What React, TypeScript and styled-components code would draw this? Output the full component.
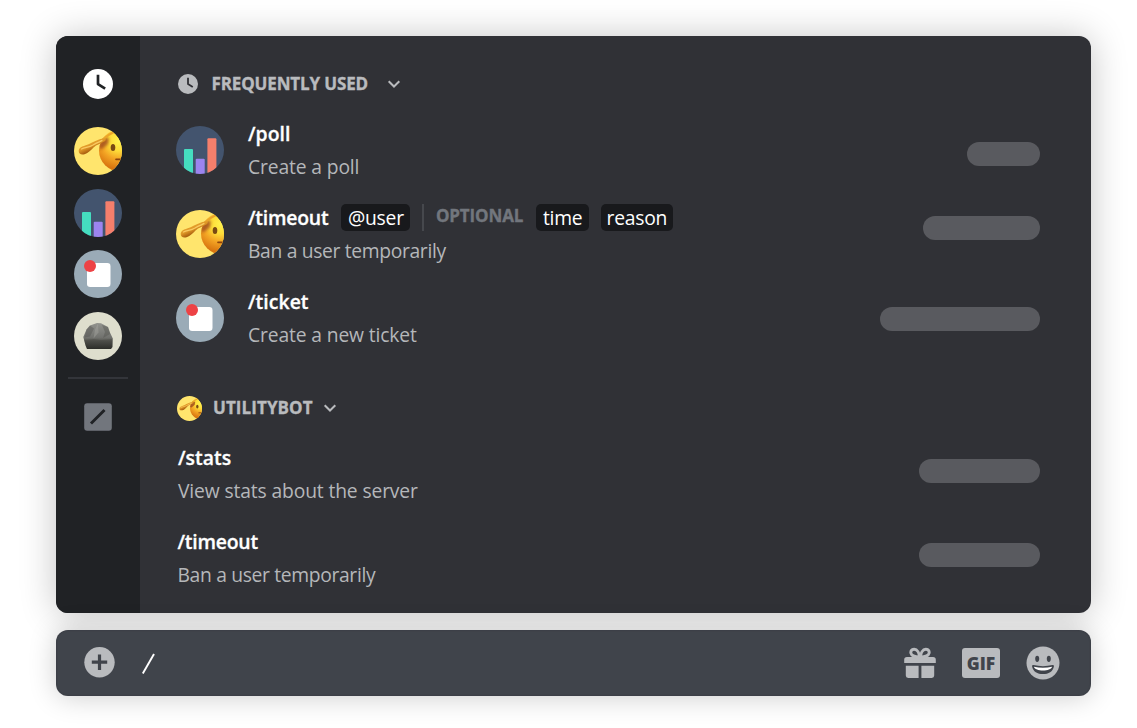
import React, { useId } from "react";
import styled, { createGlobalStyle } from "styled-components";

const Global = createGlobalStyle`
  * { box-sizing: border-box; }
  body {
    margin: 0;
    background: #fff;
    font-family: "Open Sans", "Noto Sans", sans-serif;
    -webkit-font-smoothing: antialiased;
  }
  svg { display: block; flex: none; }
`;

const Page = styled.main`
  width: 1137px;
  height: 728px;
  padding: 36px 46px 32px 56px;
  display: flex;
  flex-direction: column;
  gap: 16.6px;
  overflow: hidden;
`;

const Panel = styled.section`
  display: flex;
  width: 1035px;
  height: 577.4px;
  flex: none;
  border-radius: 12px;
  background: #303136;
  box-shadow: 0 1px 36px rgba(0, 0, 0, 0.24);
`;

const Rail = styled.nav`
  width: 84px;
  padding-top: 33px;
  display: flex;
  flex-direction: column;
  align-items: center;
  background: #202225;
  border-radius: 12px 0 0 12px;
`;

const RailBots = styled.div`
  display: flex;
  flex-direction: column;
  gap: 13.6px;
  margin-top: 28.3px;
`;

const Divider = styled.hr`
  width: 60px;
  height: 2px;
  margin: 17.4px 0 23.3px;
  border: 0;
  background: #33353a;
`;

const Content = styled.div`
  flex: 1;
  padding: 15px 51px 0 36px;
  display: flex;
  flex-direction: column;
  gap: 6px;
`;

const Group = styled.section`
  display: flex;
  flex-direction: column;
`;

const GroupHeader = styled.header<{ $gap: number; $inset: number; $track: number }>`
  height: 66px;
  display: flex;
  align-items: center;
  padding-left: ${(p) => p.$inset}px;
  color: #b9bbbe;
  h2 {
    margin: 0 ${(p) => p.$gap}px 0 0;
    font-size: 17px;
    line-height: 24px;
    font-weight: 700;
    letter-spacing: ${(p) => p.$track}px;
    -webkit-text-stroke: 0.35px currentColor;
  }
`;

const HeaderIcon = styled.span<{ $space: number }>`
  margin-right: ${(p) => p.$space}px;
`;

const Row = styled.article<{ $inset?: number }>`
  height: 84px;
  display: flex;
  align-items: flex-start;
  padding-left: ${(p) => p.$inset ?? 0}px;
`;

const RowAvatar = styled.div`
  margin: 9px 24px 0 0;
`;

const RowText = styled.div`
  flex: 1;
`;

const TitleLine = styled.div`
  height: 33px;
  display: flex;
  align-items: center;
`;

const Command = styled.h3<{ $track?: number }>`
  margin: 0;
  color: #fff;
  font-size: 19.4px;
  line-height: 33px;
  font-weight: 600;
  letter-spacing: ${(p) => p.$track ?? 0.05}px;
  -webkit-text-stroke: 0.3px currentColor;
`;

const Description = styled.p<{ $track?: number }>`
  margin: 0;
  color: #b5b7ba;
  font-size: 19.3px;
  line-height: 33px;
  letter-spacing: ${(p) => p.$track ?? -0.14}px;
`;

const Tag = styled.span<{ $width: number }>`
  width: ${(p) => p.$width}px;
  height: 27px;
  display: flex;
  justify-content: center;
  border-radius: 5px;
  background: #18191c;
  color: #fff;
  font-size: 19.3px;
  line-height: 27px;
  letter-spacing: -0.25px;
`;

const Params = styled.div`
  display: flex;
  align-items: center;
  margin-left: 13px;
`;

const Rule = styled.span`
  width: 2px;
  height: 27px;
  margin: 0 11.5px 0 12px;
  background: #46484d;
`;

const Optional = styled.span`
  width: 89px;
  margin-right: 11.5px;
  padding-bottom: 4px;
  color: #72767d;
  font-size: 17px;
  font-weight: 700;
  letter-spacing: -0.12px;
  -webkit-text-stroke: 0.35px currentColor;
`;

const Tags = styled.div`
  display: flex;
  gap: 12px;
`;

const Placeholder = styled.div<{ $width: number; $top: number }>`
  width: ${(p) => p.$width}px;
  height: 24px;
  margin-top: ${(p) => p.$top}px;
  border-radius: 12px;
  background: #595a5f;
`;

const Composer = styled.footer`
  width: 1035px;
  height: 66px;
  flex: none;
  display: flex;
  align-items: center;
  padding: 0 31px 0 28px;
  border-radius: 12px;
  background: #40444b;
  box-shadow: 0 1px 28px rgba(0, 0, 0, 0.2), inset 0 0 2px rgba(24, 25, 35, 0.35);
`;

const Draft = styled.div`
  flex: 1;
  padding: 3px 0 0 25px;
`;

const Actions = styled.div`
  display: flex;
  align-items: center;
  gap: 26px;
`;

const GifBadge = styled.span`
  width: 38px;
  height: 30px;
  display: flex;
  align-items: center;
  justify-content: center;
  border-radius: 3px;
  background: #b9bbbe;
  color: #40444b;
  font-size: 17.5px;
  line-height: 30px;
  font-weight: 800;
`;

function Clock({ size, fill, hand }: { size: number; fill: string; hand: string }) {
  return (
    <svg width={size} height={size} viewBox="0 0 30 30">
      <circle cx="15" cy="15" r="15" fill={fill} />
      <path d="M15 7v8.100l6 3.800" fill="none" stroke={hand} strokeWidth="2.700" strokeLinecap="square" strokeLinejoin="round" />
    </svg>
  );
}

function Salute({ size = 48 }: { size?: number }) {
  const id = useId();
  return (
    <svg width={size} height={size} viewBox="0 0 48 48">
      <defs>
        <clipPath id={id + "c"}><circle cx="24" cy="24" r="24" /></clipPath>
        <clipPath id={id + "k"}><circle cx="46" cy="23.5" r="21" /></clipPath>
        <radialGradient id={id + "f"} gradientUnits="userSpaceOnUse" cx="45" cy="14" r="28">
          <stop offset="0" stopColor="#fff34d" />
          <stop offset=".35" stopColor="#fedc39" />
          <stop offset=".65" stopColor="#f3a424" />
          <stop offset="1" stopColor="#d8740f" />
        </radialGradient>
        <linearGradient id={id + "h"} gradientUnits="userSpaceOnUse" x1="14" y1="15" x2="18" y2="24">
          <stop offset="0" stopColor="#e9a730" />
          <stop offset=".5" stopColor="#dd9526" />
          <stop offset="1" stopColor="#a4590c" />
        </linearGradient>
        <filter id={id + "b"} x="-50%" y="-50%" width="200%" height="200%"><feGaussianBlur stdDeviation="1.5" /></filter>
      </defs>
      <g clipPath={`url(#${id}c)`}>
        <path d="M0 0h48v48H0z" fill="#ffe56d" />
        <circle cx="46" cy="23.500" r="21" fill={`url(#${id}f)`} />
        <g clipPath={`url(#${id}k)`}>
          <path d="M24 21l4-10 7 0-1 6-6 5z" fill="#96401a" opacity=".75" filter={`url(#${id}b)`} />
        </g>
        <path d="M29 12.200C32 9.500 35 7.300 40 5" fill="none" stroke="#eba52b" strokeWidth="2" />
        <path d="M4.700 23.800C5 20.800 8 19.600 11 18.600C16 16.800 20 14 25 12.400C27.500 11.600 29.600 10.800 31 11.300C32.300 12 32 13.700 30.500 14.500C27 16.500 22.500 17.500 19.500 20.500C17 23 14.500 26 10.500 27.300C7 28.300 4.500 26.500 4.700 23.800z" fill={`url(#${id}h)`} />
        <path d="M7.500 22C11.500 20.200 15 20.500 19 18C22 16 25 15 28 13.700" fill="none" stroke="#f9ca62" strokeWidth="1.300" strokeLinecap="round" />
        <ellipse cx="39" cy="20.500" rx="2.300" ry="3.500" fill="#794a13" />
        <path d="M42 32.300h6" stroke="#8c430d" strokeWidth="1.700" strokeLinecap="round" />
      </g>
    </svg>
  );
}

function Poll() {
  const id = useId();
  return (
    <svg width="48" height="48" viewBox="0 0 48 48">
      <clipPath id={id}><circle cx="24" cy="24" r="24" /></clipPath>
      <g clipPath={`url(#${id})`}>
        <path d="M0 0h48v48H0z" fill="#43546e" />
        <rect x="8" y="23" width="9" height="27" rx="1" fill="#45ddc0" />
        <rect x="19.700" y="32.700" width="9" height="18" rx="1" fill="#9c84ef" />
        <rect x="31.400" y="12.300" width="9" height="38" rx="1" fill="#f57f6c" />
      </g>
    </svg>
  );
}

function Ticket() {
  return (
    <svg width="48" height="48" viewBox="0 0 48 48">
      <circle cx="24" cy="24" r="24" fill="#9aabb7" />
      <rect x="13" y="13" width="23.500" height="24" rx="3.200" fill="#fff" />
      <circle cx="16" cy="16" r="6" fill="#ed4245" />
    </svg>
  );
}

function Rock() {
  const id = useId();
  return (
    <svg width="48" height="48" viewBox="0 0 48 48">
      <defs>
        <linearGradient id={id} x1="0" y1="0" x2="0" y2="1">
          <stop offset="0" stopColor="#92938e" />
          <stop offset=".55" stopColor="#72736f" />
          <stop offset=".7" stopColor="#555651" />
          <stop offset="1" stopColor="#2e2f2b" />
        </linearGradient>
      </defs>
      <circle cx="24" cy="24" r="24" fill="#dedecd" />
      <path d="M12.500 17.500L16 13.500l7-2.500 4 .3 7 3.700 2.200 6 2.600 5.500-.3 8.500-1.500 2H13l-1.500-3.500L9.300 25z" fill={`url(#${id})`} />
      <path d="M12.500 17.500L16 13.500l4 3-4 8-5.500 1z" fill="#50514d" opacity=".4" />
      <path d="M24 11.500l-3 6-1.500 9 5-6z" fill="#aaaaa4" opacity=".4" />
      <path d="M28 13l3 7-2 6 7-4-2-7z" fill="#4a4b46" opacity=".35" />
      <path d="M10 28l10-1 7 1 11-1-.5 8-1 2H13z" fill="#262724" opacity=".2" />
    </svg>
  );
}

function SlashBox() {
  return (
    <svg width="28" height="28" viewBox="0 0 28 28">
      <rect x=".2" y=".2" width="27.600" height="27.600" rx="3" fill="#72767d" />
      <path d="M8 19.500L19.500 8" stroke="#202225" strokeWidth="2.900" strokeLinecap="square" />
    </svg>
  );
}

function Chevron() {
  return (
    <svg width="14" height="10" viewBox="0 0 14 10">
      <path d="M1.700 2.200L7 7.500l5.300-5.300" fill="none" stroke="#b9bbbe" strokeWidth="2" />
    </svg>
  );
}

function Plus() {
  return (
    <svg width="31" height="31" viewBox="0 0 31 31">
      <circle cx="15.500" cy="15.200" r="15.200" fill="#b9bbbe" />
      <path d="M15.500 7.500v15.400M7.800 15.200h15.400" stroke="#40444b" strokeWidth="3.200" />
    </svg>
  );
}

function Gift() {
  return (
    <svg width="32" height="32" viewBox="0 0 32 32">
      <g fill="#b9bbbe">
        <path d="M3 10h26a2.800 2.800 0 0 1 2.800 2.800V16H.2v-3.200A2.800 2.800 0 0 1 3 10z" />
        <path d="M1.800 18.800h12.800V31H4.200a2.400 2.400 0 0 1-2.400-2.400zM17.400 18.800h12.800v9.800a2.400 2.400 0 0 1-2.400 2.400H17.400z" />
      </g>
      <path d="M15.600 10.300C15.300 6 13.300 2.300 10.200 2.300C6.800 2.300 5.800 5.800 7.700 7.800C9.400 9.600 13 9.900 15.600 10.300zM16.400 10.300C16.700 6 18.700 2.300 21.800 2.300C25.200 2.300 26.200 5.800 24.300 7.800C22.600 9.600 19 9.900 16.400 10.300z" fill="none" stroke="#b9bbbe" strokeWidth="3" strokeLinejoin="round" />
    </svg>
  );
}

function Smile() {
  return (
    <svg width="34" height="34" viewBox="0 0 34 34">
      <circle cx="17" cy="17" r="16.500" fill="#b9bbbe" />
      <ellipse cx="11.200" cy="12.800" rx="2" ry="3.100" fill="#40444b" />
      <ellipse cx="22.800" cy="12.800" rx="2" ry="3.100" fill="#40444b" />
      <path d="M7.600 19c6 1.500 12.800 1.500 18.800 0 1-.2 1.700.4 1.500 1.400C27 25.500 22.500 28 17 28S7 25.500 6.100 20.400C5.900 19.400 6.600 18.800 7.600 19z" fill="#40444b" />
      <path d="M7.900 20.700c6 1.400 12.200 1.400 18.200 0-.9 2.700-4.500 3.700-9.100 3.700s-8.200-1-9.100-3.700z" fill="#fff" />
    </svg>
  );
}

export default function App() {
  return (
    <>
      <Global />
      <Page>
        <Panel>
          <Rail>
            <Clock size={30} fill="#fff" hand="#202225" />
            <RailBots>
              <Salute />
              <Poll />
              <Ticket />
              <Rock />
            </RailBots>
            <Divider />
            <SlashBox />
          </Rail>
          <Content>
            <Group>
              <GroupHeader $gap={19} $inset={2} $track={-0.14}>
                <HeaderIcon $space={13.5}><Clock size={20} fill="#b9bbbe" hand="#2f3035" /></HeaderIcon>
                <h2>FREQUENTLY USED</h2>
                <Chevron />
              </GroupHeader>
              <Row>
                <RowAvatar><Poll /></RowAvatar>
                <RowText>
                  <Command>/poll</Command>
                  <Description>Create a poll</Description>
                </RowText>
                <Placeholder $width={73.5} $top={25.4} />
              </Row>
              <Row>
                <RowAvatar><Salute /></RowAvatar>
                <RowText>
                  <TitleLine>
                    <Command $track={-0.22}>/timeout</Command>
                    <Params>
                      <Tag $width={69}>@user</Tag>
                      <Rule />
                      <Optional>OPTIONAL</Optional>
                      <Tags>
                        <Tag $width={52.5}>time</Tag>
                        <Tag $width={72}>reason</Tag>
                      </Tags>
                    </Params>
                  </TitleLine>
                  <Description $track={-0.34}>Ban a user temporarily</Description>
                </RowText>
                <Placeholder $width={117} $top={15} />
              </Row>
              <Row>
                <RowAvatar><Ticket /></RowAvatar>
                <RowText>
                  <Command>/ticket</Command>
                  <Description>Create a new ticket</Description>
                </RowText>
                <Placeholder $width={160.5} $top={22.4} />
              </Row>
            </Group>
            <Group>
              <GroupHeader $gap={10.5} $inset={1} $track={0.08}>
                <HeaderIcon $space={11}><Salute size={25} /></HeaderIcon>
                <h2>UTILITYBOT</h2>
                <Chevron />
              </GroupHeader>
              <Row $inset={2}>
                <RowText>
                  <Command>/stats</Command>
                  <Description>View stats about the server</Description>
                </RowText>
                <Placeholder $width={121.5} $top={18} />
              </Row>
              <Row $inset={1.5}>
                <RowText>
                  <Command $track={-0.22}>/timeout</Command>
                  <Description $track={-0.34}>Ban a user temporarily</Description>
                </RowText>
                <Placeholder $width={121.5} $top={18} />
              </Row>
            </Group>
          </Content>
        </Panel>
        <Composer>
          <Plus />
          <Draft>
            <svg width="16" height="22" viewBox="0 0 16 22">
              <path d="M2.800 20.500L14 1" stroke="#fff" strokeWidth="1.900" />
            </svg>
          </Draft>
          <Actions>
            <Gift />
            <GifBadge>GIF</GifBadge>
            <Smile />
          </Actions>
        </Composer>
      </Page>
    </>
  );
}
